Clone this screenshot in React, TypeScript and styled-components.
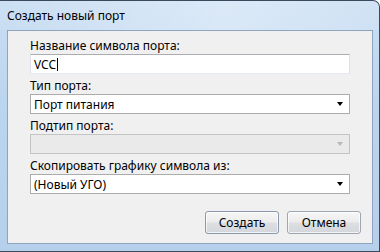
import React from 'react'
import styled, { createGlobalStyle } from 'styled-components'

const GlobalStyle = createGlobalStyle`
    html, body {
        margin: 0;
        padding: 0;
        background: #ffffff;
    }
    body {
        font-family: "Noto Sans", "Open Sans", sans-serif;
        font-size: 12px;
        color: #000;
    }
`

const Window = styled.div`
    width: 380px;
    height: 252px;
    box-sizing: border-box;
    border-top: 1px solid #3a4a5c;
    border-right: 1px solid #3a4a5c;
    border-bottom: 1px solid #3a4a5c;
    border-top-right-radius: 7px;
    background: linear-gradient(to bottom, #c9def3 0%, #bcd5ee 40%, #b6d0ec 100%);
    display: flex;
    flex-direction: column;
    overflow: hidden;
`

const TitleBar = styled.div`
    height: 29px;
    padding-left: 7px;
    display: flex;
    align-items: center;
    font-size: 12px;
    color: #000;
    background: linear-gradient(to right, rgba(255,255,255,0.05), rgba(255,255,255,0.35) 60%, rgba(255,255,255,0.15));
`

const Frame = styled.div`
    flex: 1;
    padding: 0 6px 7px 7px;
    display: flex;
`

const Content = styled.div`
    flex: 1;
    border: 1px solid #8fa4bd;
    background: #f0f0f0;
    padding: 7px 22px 0 22px;
    display: flex;
    flex-direction: column;
`

const Field = styled.div`
    display: flex;
    flex-direction: column;
    margin-bottom: 4px;
`

const Label = styled.div<{ $disabled?: boolean }>`
    height: 15px;
    line-height: 15px;
    margin-bottom: 1px;
    white-space: nowrap;
    color: #000;
`

const TextBox = styled.div`
    height: 20px;
    box-sizing: border-box;
    background: #fff;
    border: 1px solid;
    border-color: #abadb3 #dbdfe6 #e3e9ef #e2e3ea;
    padding-left: 3px;
    display: flex;
    align-items: center;
`

const Caret = styled.span`
    display: inline-block;
    width: 1px;
    height: 13px;
    background: #000;
    margin-left: 1px;
`

const Combo = styled.div<{ $disabled?: boolean }>`
    height: 20px;
    box-sizing: border-box;
    background: ${p => (p.$disabled ? '#eaeaea' : '#fff')};
    border: 1px solid ${p => (p.$disabled ? '#c4c4c4' : '#acacac')};
    padding: 0 6px 0 3px;
    display: flex;
    align-items: center;
    justify-content: space-between;
`

const Arrow = styled.span<{ $disabled?: boolean }>`
    width: 0;
    height: 0;
    border-left: 3.5px solid transparent;
    border-right: 3.5px solid transparent;
    border-top: 4px solid ${p => (p.$disabled ? '#b8b8b8' : '#000')};
`

const ButtonRow = styled.div`
    margin-top: 13px;
    margin-right: -11px;
    display: flex;
    justify-content: flex-end;
    gap: 8px;
`

const Button = styled.button<{ $default?: boolean }>`
    width: 74px;
    height: 23px;
    box-sizing: border-box;
    font-family: inherit;
    font-size: 12px;
    color: #000;
    border: 1px solid ${p => (p.$default ? '#8a99ad' : '#a0a7b1')};
    border-radius: 3px;
    background: linear-gradient(to bottom, #f6f6f6 0%, #ececec 48%, #dedfe2 52%, #d3d6db 100%);
    box-shadow: inset 0 0 0 1px rgba(255,255,255,0.7);
    padding: 0;
`

export default function App() {
    return (
        <>
            <GlobalStyle />
            <Window>
                <TitleBar>Создать новый порт</TitleBar>
                <Frame>
                    <Content>
                        <Field>
                            <Label>Название символа порта:</Label>
                            <TextBox>VCC<Caret /></TextBox>
                        </Field>
                        <Field>
                            <Label>Тип порта:</Label>
                            <Combo>Порт питания<Arrow /></Combo>
                        </Field>
                        <Field>
                            <Label>Подтип порта:</Label>
                            <Combo $disabled><span /><Arrow $disabled /></Combo>
                        </Field>
                        <Field>
                            <Label>Скопировать графику символа из:</Label>
                            <Combo>(Новый УГО)<Arrow /></Combo>
                        </Field>
                        <ButtonRow>
                            <Button $default>Создать</Button>
                            <Button>Отмена</Button>
                        </ButtonRow>
                    </Content>
                </Frame>
            </Window>
        </>
    )
}
